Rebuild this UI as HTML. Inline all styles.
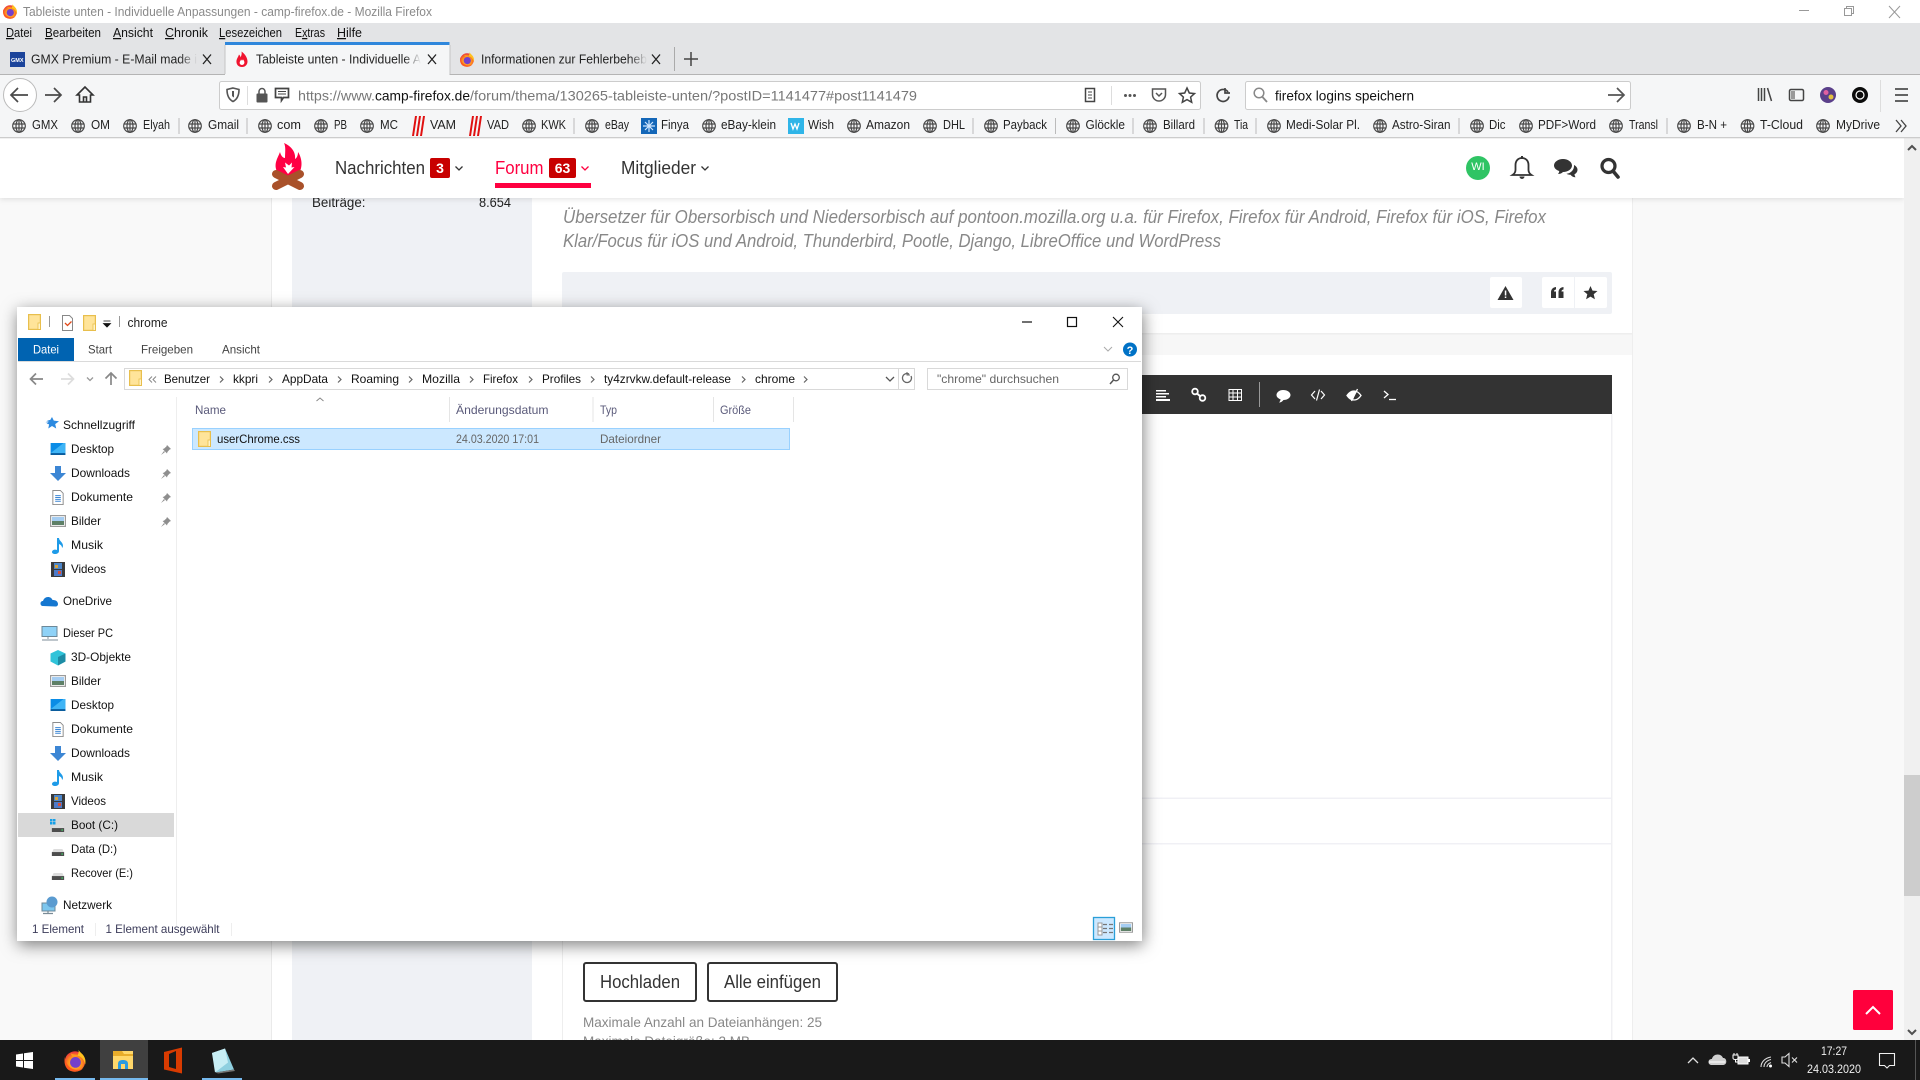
<!DOCTYPE html>
<html lang="de">
<head>
<meta charset="utf-8">
<title>Tableiste unten</title>
<style>
html,body{margin:0;padding:0;width:1920px;height:1080px;overflow:hidden;background:#f9f9f9}
svg{display:block}
text{font-family:"Liberation Sans",sans-serif;fill:#222}
.m{font-size:12.5px;fill:#111}
.tab{font-size:12.5px;fill:#222}
.bm{font-size:12.5px;fill:#222}
.ex{font-size:12px;fill:#111}
.hd{font-size:12px;fill:#5a5a7a}
.gr{font-size:12px;fill:#666}
.site{font-size:18px;fill:#333}
.it{font-size:18px;font-style:italic;fill:#888}
</style>
</head>
<body>
<svg xmlns="http://www.w3.org/2000/svg" width="1920" height="1080" viewBox="0 0 1920 1080">
<defs>
<filter id="ws" x="-10%" y="-10%" width="120%" height="120%"><feDropShadow dx="1" dy="4" stdDeviation="8" flood-color="#000" flood-opacity=".5"/></filter>
<filter id="hs" x="-5%" y="-30%" width="110%" height="160%"><feDropShadow dx="0" dy="1" stdDeviation="3" flood-color="#000" flood-opacity=".12"/></filter>
<radialGradient id="ff" cx=".5" cy=".6" r=".6"><stop offset="0" stop-color="#ffd23a"/><stop offset=".6" stop-color="#ff8a1e"/><stop offset="1" stop-color="#e8303c"/></radialGradient>
<linearGradient id="f1" gradientUnits="userSpaceOnUse" x1="180" x2="197" y1="0" y2="0"><stop offset="0" stop-color="#222"/><stop offset="1" stop-color="#222" stop-opacity="0"/></linearGradient>
<linearGradient id="f2" gradientUnits="userSpaceOnUse" x1="404" x2="421" y1="0" y2="0"><stop offset="0" stop-color="#222"/><stop offset="1" stop-color="#222" stop-opacity="0"/></linearGradient>
<linearGradient id="f3" gradientUnits="userSpaceOnUse" x1="630" x2="647" y1="0" y2="0"><stop offset="0" stop-color="#222"/><stop offset="1" stop-color="#222" stop-opacity="0"/></linearGradient>
<symbol id="g" viewBox="0 0 14 14" overflow="visible"><g fill="none" stroke="#4a4a4a" stroke-width="1.2"><circle cx="7" cy="7" r="6.3"/><ellipse cx="7" cy="7" rx="3" ry="6.3"/><path d="M1 5h12M1 9h12M7 .7v12.6"/></g></symbol>
<symbol id="fo" viewBox="0 0 13 16"><rect x=".6" y=".6" width="11.8" height="14.8" fill="#ffe49a" stroke="#e8bf4d" stroke-width="1.2"/><rect x="10" y="9" width="2.4" height="6.4" fill="#fff3c8" stroke="#e8bf4d" stroke-width=".8"/></symbol>
<symbol id="fx" viewBox="0 0 16 16"><circle cx="8" cy="9" r="6.8" fill="url(#ff)"/><path d="M10 .3c.5 2.500 4 3.500 4.800 7.200.3 1.500.2 2.500 0 3.500C14 7.500 12 5.500 9.500 5.200 10.500 3.500 10.800 2 10 .3z" fill="#ffc21e"/><path d="M5 3.500c1 .5 2.500 1 4 1 1 .6-.5 2-2 2.500z" fill="#ff9a1e"/><circle cx="8.300" cy="9.600" r="3.600" fill="#7440cc"/><path d="M1.300 6c.2 4.500 3.500 8.800 8.700 8.500 1.500 0 2.500-.4 3.500-1-2.500 2.600-6.500 2.800-9.500 1.300C1.500 13.300.4 9.500 1.300 6z" fill="#ff5a1f"/></symbol>
<symbol id="bar" viewBox="0 0 14 20"><path d="M3 0h2L2 20H0zM7 0h2L6 20H4zM11 0h2l-3 20H8z" fill="#e01010"/></symbol>
<symbol id="desk" viewBox="0 0 16 13"><rect width="16" height="13" fill="#0a8ce6"/><path d="M0 11L14 0h2v11z" fill="#3fb4f5"/><rect y="11" width="16" height="2" fill="#0a5c9c"/></symbol>
<symbol id="dl" viewBox="0 0 16 15"><path d="M5 0h6v7h5l-8 8-8-8h5z" fill="#3c86d4"/></symbol>
<symbol id="doc" viewBox="0 0 12 16"><path d="M.5.5h8l3 3v12h-11z" fill="#fff" stroke="#8b8b8b"/><path d="M3 6h6M3 8h6M3 10h6M3 12h6" stroke="#3c86d4"/></symbol>
<symbol id="pic" viewBox="0 0 16 12"><rect x=".6" y=".6" width="14.8" height="10.8" fill="#fff" stroke="#9b9b9b" stroke-width="1.2"/><rect x="2" y="2" width="12" height="4" fill="#a5cdf2"/><rect x="2" y="6" width="12" height="4" fill="#5e8067"/></symbol>
<symbol id="mus" viewBox="0 0 12 16"><path d="M5 0h2c0 3 4 4 4 8 0 1-1 2-1 2 0-2-1-3-3-4v7c0 2-2 3-4 3s-3-1-3-2c0-2 3-3 5-2z" fill="#1e9be8"/></symbol>
<symbol id="vid" viewBox="0 0 14 15"><rect width="14" height="15" fill="#3a3a3a"/><rect x="3" y="1" width="8" height="6" fill="#4d86c9"/><rect x="3" y="8" width="8" height="6" fill="#4d7ac9"/><rect x="4" y="3" width="3" height="3" fill="#d8a23a"/><rect x="7" y="9" width="3" height="3" fill="#d84f3a"/></symbol>
<symbol id="pin" viewBox="0 0 10 10"><path d="M6 0l4 4-1.5.6L6.4 7 6 8.5 1.6 4 3 3.6 5.4 1.5zM3 6L0 10l4-3z" fill="#8e8e8e"/></symbol>
<symbol id="hdd" viewBox="0 0 14 8"><path d="M2 0h10l2 4H0z" fill="#ddd"/><rect y="3.5" width="14" height="4.5" fill="#4d4d4d"/><rect x="11" y="5" width="1.5" height="1.5" fill="#3fe06a"/></symbol>
</defs>

<!-- page background -->
<rect width="1920" height="1080" fill="#f9f9f9"/>
<rect x="272" y="138" width="1360" height="902" fill="#fff"/>
<rect x="271" y="138" width="1" height="902" fill="#eaeaea"/>
<rect x="292" y="138" width="240" height="902" fill="#eff1f5"/>
<rect x="532" y="334" width="1100" height="21" fill="#f7f7f7"/>
<rect x="532" y="333" width="1100" height="1.5" fill="#eee"/>
<rect x="1632" y="138" width="1" height="902" fill="#eee"/>
<text x="312" y="207" font-size="14" textLength="53.5" lengthAdjust="spacingAndGlyphs" style="fill:#222">Beiträge:</text>
<text x="479" y="207" font-size="14" textLength="32" lengthAdjust="spacingAndGlyphs" style="fill:#222">8.654</text>
<text class="it" x="563" y="223" textLength="983" lengthAdjust="spacingAndGlyphs">Übersetzer für Obersorbisch und Niedersorbisch auf pontoon.mozilla.org u.a. für Firefox, Firefox für Android, Firefox für iOS, Firefox</text>
<text class="it" x="563" y="247" textLength="658" lengthAdjust="spacingAndGlyphs">Klar/Focus für iOS und Android, Thunderbird, Pootle, Django, LibreOffice und WordPress</text>
<rect x="562" y="272" width="1050" height="42" rx="2" fill="#eff1f5"/>
<rect x="1490" y="277" width="32" height="31" rx="2" fill="#fff"/>
<rect x="1542" y="277" width="65" height="31" rx="2" fill="#fff"/>
<rect x="1574" y="277" width="1" height="31" fill="#eff1f5"/>
<path d="M1505.500 286l8 14h-16z" fill="#333"/><rect x="1504.800" y="290.500" width="1.500" height="5" fill="#fff"/><rect x="1504.800" y="296.500" width="1.500" height="1.500" fill="#fff"/>
<path d="M1551 298v-5.500c0-3 1.500-5 5-5.500v2.500c-1.500.3-2 1-2 2h2v6.500zM1558.500 298v-5.500c0-3 1.500-5 5-5.500v2.500c-1.500.3-2 1-2 2h2v6.500z" fill="#333"/>
<path d="M1590.500 286l2 4.600 5 .4-3.800 3.300 1.200 5-4.400-2.700-4.400 2.700 1.200-5-3.800-3.300 5-.4z" fill="#333"/>

<!-- editor -->
<rect x="562" y="414" width="1" height="626" fill="#eee"/>
<rect x="1611" y="414" width="1.500" height="626" fill="#f0f0f3"/>
<rect x="562" y="375" width="1050" height="39" fill="#333"/>
<rect x="1142" y="797.500" width="469" height="1.500" fill="#f0f0f5"/>
<rect x="1142" y="843" width="469" height="1.500" fill="#f0f0f5"/>
<g fill="#fff" stroke="none">
<path d="M1156 390h10v1.500h-10zM1156 393h13v1.500h-13zM1156 396h10v1.500h-10zM1156 399h14v2h-14z"/>
<rect x="1259" y="382" width="1" height="25" fill="#999"/>
<path d="M1283 390c4.500 0 7.500 2.300 7.500 5s-3 5-7 5c-1 1.500-3 2.500-4.500 2.500 1-1 1.500-2 1.500-3.200-2.500-.8-4-2.500-4-4.300 0-2.700 3-5 6.500-5z"/>
<path d="M1354 391c-3 0-5.500 2-7 4.500 1.500 2.500 4 4.500 6 4.500l3-9z"/>
</g>
<g fill="none" stroke="#fff">
<path d="M1197 393.500l3.500 3" stroke-width="2"/><circle cx="1195" cy="391.500" r="2.800" stroke-width="1.800"/><circle cx="1202.500" cy="398" r="2.800" stroke-width="1.800"/>
<path d="M1229 389.500h12.500v11H1229zM1229 393h12.500M1229 397h12.500M1233 389.500v11M1237.500 389.500v11" stroke-width="1"/>
<path d="M1315 391l-3.500 4 3.500 4M1321 391l3.500 4-3.500 4M1319.500 389.500l-3 11" stroke-width="1.200"/>
<path d="M1347 395.500c2-3 4.500-4.500 7-4.500s5 1.500 7 4.500c-2 3-4.500 4.500-7 4.500s-5-1.500-7-4.500zM1357.500 389l-6 12" stroke-width="1.300"/>
<path d="M1384 391l4 3.500-4 3.500" stroke-width="1.300"/><path d="M1389 399.500h7" stroke-width="1.300"/>
</g>

<!-- bottom buttons -->
<rect x="584" y="963" width="112" height="38" rx="2" fill="#fff" stroke="#333" stroke-width="2"/>
<rect x="708" y="963" width="129" height="38" rx="2" fill="#fff" stroke="#333" stroke-width="2"/>
<text x="600" y="988" font-size="18" textLength="80" lengthAdjust="spacingAndGlyphs" style="fill:#333">Hochladen</text>
<text x="724" y="988" font-size="18" textLength="97" lengthAdjust="spacingAndGlyphs" style="fill:#333">Alle einfügen</text>
<text x="583" y="1027" font-size="14" textLength="239" lengthAdjust="spacingAndGlyphs" style="fill:#888">Maximale Anzahl an Dateianhängen: 25</text>
<text x="583" y="1046" font-size="14" textLength="167" lengthAdjust="spacingAndGlyphs" style="fill:#888">Maximale Dateigröße: 2 MB</text>

<!-- site header -->
<rect x="0" y="138" width="1904" height="60" fill="#fff" filter="url(#hs)"/>
<path d="M288 179c-9-1-14-9-12-17 1-4 3-7 4-10 1 4 3 6 5 6 0-6 1-11-1-15 7 3 12 9 11 16 2-1 3-4 3-7 4 6 5 15 1 21-2 4-6 6-11 6z" fill="#ff0044"/>
<path d="M288 174l-5-7 3 .5-1-5 4 3 3-3-.5 5 3-.5z" fill="#fff"/>
<path d="M276 174l24 12M300 174l-24 12" stroke="#a9512a" stroke-width="8" stroke-linecap="round"/>
<text class="site" x="335" y="174" textLength="90" lengthAdjust="spacingAndGlyphs">Nachrichten</text>
<rect x="430" y="158" width="20" height="20" rx="2" fill="#c80000"/>
<text x="440" y="173" font-size="14" font-weight="700" text-anchor="middle" style="fill:#fff">3</text>
<path d="M455.500 166.500l3.500 3.500 3.500-3.500" fill="none" stroke="#333" stroke-width="1.300"/>
<text class="site" x="495" y="174" textLength="48.500" lengthAdjust="spacingAndGlyphs" style="fill:#ff0040">Forum</text>
<rect x="549" y="158" width="27" height="20" rx="2" fill="#c80000"/>
<text x="562.500" y="173" font-size="14" font-weight="700" text-anchor="middle" style="fill:#fff">63</text>
<path d="M581.500 166.500l3.500 3.500 3.500-3.500" fill="none" stroke="#ff0040" stroke-width="1.300"/>
<rect x="495" y="183" width="96" height="5" fill="#ff0040"/>
<text class="site" x="621" y="174" textLength="75" lengthAdjust="spacingAndGlyphs">Mitglieder</text>
<path d="M701.500 166.500l3.500 3.500 3.500-3.500" fill="none" stroke="#333" stroke-width="1.300"/>
<circle cx="1478" cy="168" r="12" fill="#2fc464"/>
<text x="1478" y="170" font-size="11" text-anchor="middle" style="fill:#fff">WI</text>
<path d="M1522 158c-4 0-6.500 3-6.500 7v5c0 2-1.500 4-3 5h19c-1.500-1-3-3-3-5v-5c0-4-2.500-7-6.500-7z" fill="none" stroke="#333" stroke-width="1.800"/>
<path d="M1519.500 176.500a2.500 2.500 0 0 0 5 0zM1521 156h2v3h-2z" fill="#333"/>
<path d="M1563 159c5 0 9 3 9 6.500s-4 6.500-9 6.500c-1.500 1.500-3.500 2-5 2 .8-1 1.300-2 1.200-3-3-1-5.200-3-5.200-5.500 0-3.500 4-6.500 9-6.500z" fill="#333"/>
<path d="M1574 165c2 1 3.500 2.700 3.500 4.700 0 2-1.200 3.600-3 4.500 0 1 .5 2 1 3-2 0-4-1-5-2.500-1.500 0-3-.3-4-1 4-.2 8-3.700 7.500-8.700z" fill="#333"/>
<circle cx="1608.500" cy="166" r="6.500" fill="none" stroke="#333" stroke-width="3.200"/>
<path d="M1613 171l5 6" stroke="#333" stroke-width="3.600" stroke-linecap="round"/>

<!-- scrollbar -->
<rect x="1904" y="138" width="16" height="902" fill="#f0f0f0"/>
<rect x="1904" y="775" width="16" height="121" fill="#cdcdcd"/>
<path d="M1908 150l4-4 4 4" fill="none" stroke="#505050" stroke-width="2"/>
<path d="M1908 1030l4 4 4-4" fill="none" stroke="#505050" stroke-width="2"/>
<rect x="1853" y="990" width="40" height="40" rx="1.500" fill="#ff003c"/>
<path d="M1866 1014l7-7 7 7" fill="none" stroke="#fff" stroke-width="2"/>

<!-- browser chrome -->
<rect width="1920" height="23" fill="#fff"/>
<rect y="23" width="1920" height="51" fill="#e3e4e6"/>
<rect y="74" width="1920" height="1" fill="#b4b4b4"/>
<rect y="75" width="1920" height="62" fill="#f5f6f7"/>
<rect y="137" width="1920" height="1.300" fill="#ccc"/>
<use href="#fx" x="2" y="3" width="16" height="16"/>
<text x="23" y="16" font-size="12.500" textLength="409" lengthAdjust="spacingAndGlyphs" style="fill:#8a8a8a">Tableiste unten - Individuelle Anpassungen - camp-firefox.de - Mozilla Firefox</text>
<path d="M1799 10.500h10" stroke="#999"/>
<path d="M1844.500 8.500h7v7h-7zM1846.500 8.500v-2h7v7h-2" fill="none" stroke="#999"/>
<path d="M1889 6l11 12M1900 6l-11 12" stroke="#999"/>
<text class="m" x="6" y="37" textLength="26" lengthAdjust="spacingAndGlyphs"><tspan style="text-decoration:underline">D</tspan>atei</text>
<text class="m" x="45" y="37" textLength="56" lengthAdjust="spacingAndGlyphs"><tspan style="text-decoration:underline">B</tspan>earbeiten</text>
<text class="m" x="113" y="37" textLength="40" lengthAdjust="spacingAndGlyphs"><tspan style="text-decoration:underline">A</tspan>nsicht</text>
<text class="m" x="165" y="37" textLength="43" lengthAdjust="spacingAndGlyphs"><tspan style="text-decoration:underline">C</tspan>hronik</text>
<text class="m" x="219" y="37" textLength="63" lengthAdjust="spacingAndGlyphs"><tspan style="text-decoration:underline">L</tspan>esezeichen</text>
<text class="m" x="295" y="37" textLength="30" lengthAdjust="spacingAndGlyphs">E<tspan style="text-decoration:underline">x</tspan>tras</text>
<text class="m" x="337" y="37" textLength="25" lengthAdjust="spacingAndGlyphs"><tspan style="text-decoration:underline">H</tspan>ilfe</text>

<!-- tabs -->
<rect x="225" y="42" width="224.500" height="33" fill="#f5f6f7"/>
<rect x="225" y="42" width="224.500" height="3" fill="#2f87dc"/>
<rect x="224.500" y="45" width="1" height="29" fill="#c4c4c4"/><rect x="449.500" y="45" width="1" height="29" fill="#c4c4c4"/>
<rect x="10" y="52" width="15" height="15" fill="#1c449b"/>
<text x="11" y="62" font-size="5.500" font-weight="700" style="fill:#fff">GMX</text>
<text class="tab" x="31" y="63.500" textLength="166" lengthAdjust="spacingAndGlyphs" style="fill:url(#f1)">GMX Premium - E-Mail made i</text>
<path d="M203 54.500l8 9.500M211 54.500l-8 9.500" stroke="#222" stroke-width="1.300"/>
<path d="M242 67c-4 0-6-3-5.500-6.500.3-2 2-4 2.500-6 1 1 1.500 2 1.500 3 1-2 1.500-4 1-6 3 2 6 6 6 10 0 3-2 5.500-5.500 5.500z" fill="#f0142f"/>
<path d="M242 65c-1.500 0-2.500-1.200-2.300-2.600.1-1 1-1.800 1.300-3l1 1.300 1-1.300c.8 1 1.400 2 1.400 3 0 1.400-1 2.600-2.400 2.600z" fill="#fff"/>
<text class="tab" x="256" y="63.500" textLength="165" lengthAdjust="spacingAndGlyphs" style="fill:url(#f2)">Tableiste unten - Individuelle A</text>
<path d="M428 54.500l8 9.500M436 54.500l-8 9.500" stroke="#222" stroke-width="1.300"/>
<use href="#fx" x="459" y="51" width="16" height="16"/>
<text class="tab" x="481" y="63.500" textLength="166" lengthAdjust="spacingAndGlyphs" style="fill:url(#f3)">Informationen zur Fehlerbeheb</text>
<path d="M652 54.500l8 9.500M660 54.500l-8 9.500" stroke="#222" stroke-width="1.300"/>
<rect x="674" y="47" width="1" height="24" fill="#aaa"/>
<path d="M691 52v14M684 59h14" stroke="#444" stroke-width="1.500"/>

<!-- navbar -->
<circle cx="20" cy="95" r="16.500" fill="#fff" stroke="#bbb"/>
<path d="M28 95H12M18 88l-7 7 7 7" fill="none" stroke="#4a4a4a" stroke-width="1.700"/>
<path d="M45 95h16M54 88l7 7-7 7" fill="none" stroke="#4a4a4a" stroke-width="1.700"/>
<path d="M85 87l-8 8h2.500v7h11v-7h2.500zM83.500 102v-5h3v5" fill="none" stroke="#333" stroke-width="1.600"/>
<rect x="219.500" y="81.500" width="981" height="28" rx="2" fill="#fff" stroke="#ccc"/>
<path d="M233 88l6 1.500c0 6-2 10-6 12-4-2-6-6-6-12z" fill="none" stroke="#555" stroke-width="1.600"/><path d="M234 91v6.500c-1-.5-1.500-1-2-1.500v-5z" fill="#555"/>
<rect x="247" y="86" width="1" height="19" fill="#ddd"/>
<rect x="256.500" y="93.500" width="11" height="9" rx="1" fill="#555"/><path d="M259 93.500v-2a3 3 0 0 1 6 0v2" fill="none" stroke="#555" stroke-width="1.500"/>
<path d="M275.500 88.500h13v9h-5l-2 3v-3h-6z" fill="none" stroke="#444" stroke-width="1.700"/><path d="M278 91.500h8M278 94h8" stroke="#444"/>
<text x="298" y="100.600" font-size="14" textLength="77" lengthAdjust="spacingAndGlyphs" style="fill:#777">https://www.</text>
<text x="375" y="100.600" font-size="14" textLength="95" lengthAdjust="spacingAndGlyphs" style="fill:#111">camp-firefox.de</text>
<text x="470" y="100.600" font-size="14" textLength="447" lengthAdjust="spacingAndGlyphs" style="fill:#777">/forum/thema/130265-tableiste-unten/?postID=1141477#post1141479</text>
<path d="M1085.500 88.500h9v13h-9z" fill="none" stroke="#444" stroke-width="1.500"/><path d="M1088 92h4M1088 95h4M1088 98h4" stroke="#444"/>
<rect x="1111" y="86" width="1" height="19" fill="#ddd"/>
<circle cx="1125.500" cy="95.500" r="1.500" fill="#555"/><circle cx="1130" cy="95.500" r="1.500" fill="#555"/><circle cx="1134.500" cy="95.500" r="1.500" fill="#555"/>
<path d="M1152.500 89h13v5.500a6.500 6.500 0 0 1-13 0z" fill="none" stroke="#555" stroke-width="1.500"/><path d="M1156 93l3 3 3-3" fill="none" stroke="#555" stroke-width="1.500"/>
<path d="M1187 88l2.300 5 5.200.6-3.900 3.500 1.100 5.200-4.700-2.700-4.700 2.700 1.100-5.200-3.900-3.500 5.200-.6z" fill="none" stroke="#444" stroke-width="1.500"/>
<path d="M1228 92a6 6 0 1 0 1 4.500" fill="none" stroke="#444" stroke-width="1.700"/><path d="M1225 88v5h5" fill="none" stroke="#444" stroke-width="1.700"/>
<rect x="1245.500" y="81.500" width="385" height="28" rx="2" fill="#fff" stroke="#ccc"/>
<circle cx="1259" cy="93" r="4.800" fill="none" stroke="#888" stroke-width="1.500"/><path d="M1262.500 97l4.500 5" stroke="#888" stroke-width="1.800"/>
<text x="1275" y="100.600" font-size="14" textLength="139" lengthAdjust="spacingAndGlyphs" style="fill:#111">firefox logins speichern</text>
<path d="M1608 95h15M1617 88l7 7-7 7" fill="none" stroke="#555" stroke-width="1.700"/>
<path d="M1758.500 88v13M1761.500 88v13M1764.500 88v13M1767.500 88l4 13" stroke="#444" stroke-width="1.500" fill="none"/>
<rect x="1789.500" y="89.500" width="14" height="11" rx="1.500" fill="none" stroke="#444" stroke-width="1.500"/><rect x="1791" y="91" width="4" height="8" fill="#999"/>
<circle cx="1828" cy="95" r="8" fill="#5a3f8a"/><circle cx="1826" cy="92.500" r="2.500" fill="#e060a0"/><circle cx="1831" cy="97" r="2.500" fill="#e2c040"/>
<circle cx="1860" cy="95" r="8" fill="#0b0b0b"/><circle cx="1860" cy="95" r="4" fill="none" stroke="#fff" stroke-width="1.200"/>
<rect x="1880" y="80" width="1" height="32" fill="#ddd"/>
<path d="M1895 89h13M1895 95h13M1895 101h13" stroke="#333" stroke-width="1.600"/>

<!-- bookmarks -->
<g>
<use href="#g" x="12" y="119" width="14" height="14"/><text class="bm" x="32" y="129" textLength="26" lengthAdjust="spacingAndGlyphs">GMX</text>
<use href="#g" x="71" y="119" width="14" height="14"/><text class="bm" x="91" y="129" textLength="19" lengthAdjust="spacingAndGlyphs">OM</text>
<use href="#g" x="123" y="119" width="14" height="14"/><text class="bm" x="143" y="129" textLength="27" lengthAdjust="spacingAndGlyphs">Elyah</text>
<use href="#g" x="188" y="119" width="14" height="14"/><text class="bm" x="208" y="129" textLength="31" lengthAdjust="spacingAndGlyphs">Gmail</text>
<use href="#g" x="258" y="119" width="14" height="14"/><text class="bm" x="277" y="129" textLength="24" lengthAdjust="spacingAndGlyphs">com</text>
<use href="#g" x="314" y="119" width="14" height="14"/><text class="bm" x="334" y="129" textLength="13" lengthAdjust="spacingAndGlyphs">PB</text>
<use href="#g" x="360" y="119" width="14" height="14"/><text class="bm" x="380" y="129" textLength="18" lengthAdjust="spacingAndGlyphs">MC</text>
<use href="#bar" x="412" y="116" width="14" height="20"/><text class="bm" x="430" y="129" textLength="26" lengthAdjust="spacingAndGlyphs">VAM</text>
<use href="#bar" x="469" y="116" width="14" height="20"/><text class="bm" x="487" y="129" textLength="22" lengthAdjust="spacingAndGlyphs">VAD</text>
<use href="#g" x="522" y="119" width="14" height="14"/><text class="bm" x="541" y="129" textLength="25" lengthAdjust="spacingAndGlyphs">KWK</text>
<use href="#g" x="585" y="119" width="14" height="14"/><text class="bm" x="605" y="129" textLength="24" lengthAdjust="spacingAndGlyphs">eBay</text>
<rect x="641" y="118" width="16" height="16" fill="#1467b8"/><path d="M645 122l8 8M653 122l-8 8M649 120v12M643 126h12" stroke="#cfe6ff" stroke-width="1.200"/><text class="bm" x="661" y="129" textLength="28" lengthAdjust="spacingAndGlyphs">Finya</text>
<use href="#g" x="702" y="119" width="14" height="14"/><text class="bm" x="721" y="129" textLength="55" lengthAdjust="spacingAndGlyphs">eBay-klein</text>
<rect x="788" y="118" width="16" height="16" fill="#2fb5e8"/><path d="M791 123l2 6 2-5 2 5 2-6" fill="none" stroke="#fff" stroke-width="1.300"/><text class="bm" x="808" y="129" textLength="26" lengthAdjust="spacingAndGlyphs">Wish</text>
<use href="#g" x="847" y="119" width="14" height="14"/><text class="bm" x="866" y="129" textLength="44" lengthAdjust="spacingAndGlyphs">Amazon</text>
<use href="#g" x="923" y="119" width="14" height="14"/><text class="bm" x="943" y="129" textLength="22" lengthAdjust="spacingAndGlyphs">DHL</text>
<use href="#g" x="984" y="119" width="14" height="14"/><text class="bm" x="1003" y="129" textLength="44" lengthAdjust="spacingAndGlyphs">Payback</text>
<use href="#g" x="1066" y="119" width="14" height="14"/><text class="bm" x="1085.500" y="129" textLength="39.500" lengthAdjust="spacingAndGlyphs">Glöckle</text>
<use href="#g" x="1143" y="119" width="14" height="14"/><text class="bm" x="1163" y="129" textLength="32" lengthAdjust="spacingAndGlyphs">Billard</text>
<use href="#g" x="1214.500" y="119" width="14" height="14"/><text class="bm" x="1234" y="129" textLength="14" lengthAdjust="spacingAndGlyphs">Tia</text>
<use href="#g" x="1267" y="119" width="14" height="14"/><text class="bm" x="1286" y="129" textLength="74" lengthAdjust="spacingAndGlyphs">Medi-Solar Pl.</text>
<use href="#g" x="1373" y="119" width="14" height="14"/><text class="bm" x="1392" y="129" textLength="58.500" lengthAdjust="spacingAndGlyphs">Astro-Siran</text>
<use href="#g" x="1470" y="119" width="14" height="14"/><text class="bm" x="1489" y="129" textLength="16.500" lengthAdjust="spacingAndGlyphs">Dic</text>
<use href="#g" x="1519" y="119" width="14" height="14"/><text class="bm" x="1538" y="129" textLength="58" lengthAdjust="spacingAndGlyphs">PDF&gt;Word</text>
<use href="#g" x="1609" y="119" width="14" height="14"/><text class="bm" x="1629" y="129" textLength="29" lengthAdjust="spacingAndGlyphs">Transl</text>
<use href="#g" x="1677" y="119" width="14" height="14"/><text class="bm" x="1697" y="129" textLength="30" lengthAdjust="spacingAndGlyphs">B-N +</text>
<use href="#g" x="1740.500" y="119" width="14" height="14"/><text class="bm" x="1760" y="129" textLength="43" lengthAdjust="spacingAndGlyphs">T-Cloud</text>
<use href="#g" x="1816" y="119" width="14" height="14"/><text class="bm" x="1836" y="129" textLength="44" lengthAdjust="spacingAndGlyphs">MyDrive</text>
</g>
<path d="M179 118v16M247 118v16M574 118v16M973 118v16M1055.500 118v16M1133 118v16M1204 118v16M1256 118v16M1459 118v16M1667 118v16" stroke="#bbb"/>
<path d="M1896 120l5 6-5 6M1901 120l5 6-5 6" fill="none" stroke="#444" stroke-width="1.300"/>

<!-- explorer window -->
<rect x="17" y="307" width="1125" height="634" fill="#fff" filter="url(#ws)"/>
<use href="#fo" x="28" y="314" width="13" height="16"/>
<rect x="49" y="316" width="1" height="11" fill="#999"/>
<path d="M62.500 315.500h7l3 3v12h-10z" fill="#fff" stroke="#888"/><path d="M65 323l2.500 2.500 4-4" fill="none" stroke="#e04a1a" stroke-width="1.300"/>
<use href="#fo" x="83" y="315" width="13" height="16"/>
<path d="M103.500 321h7M103.500 323.500h7l-3.500 3.500z" stroke="#111" fill="#111" stroke-width=".8"/>
<rect x="119" y="316" width="1" height="11" fill="#999"/>
<text x="127.500" y="327" font-size="12.500" textLength="40" lengthAdjust="spacingAndGlyphs" style="fill:#222">chrome</text>
<path d="M1022 322h10" stroke="#111" stroke-width="1.200"/>
<rect x="1067.500" y="317.500" width="9" height="9" fill="none" stroke="#111" stroke-width="1.200"/>
<path d="M1113 317l10 10M1123 317l-10 10" stroke="#111" stroke-width="1.100"/>
<rect x="18" y="338" width="56" height="23" fill="#0063b1"/>
<text x="33" y="353.500" font-size="12" textLength="26" lengthAdjust="spacingAndGlyphs" style="fill:#fff">Datei</text>
<text class="ex" x="88" y="353.500" textLength="24" lengthAdjust="spacingAndGlyphs" style="fill:#444">Start</text>
<text class="ex" x="141" y="353.500" textLength="52" lengthAdjust="spacingAndGlyphs" style="fill:#444">Freigeben</text>
<text class="ex" x="222" y="353.500" textLength="38" lengthAdjust="spacingAndGlyphs" style="fill:#444">Ansicht</text>
<rect x="18" y="361" width="1123" height="1" fill="#dadada"/>
<path d="M1104 347l4 4 4-4" fill="none" stroke="#aaa"/>
<circle cx="1130" cy="349.500" r="7" fill="#0072c6"/>
<text x="1130" y="354" font-size="11" font-weight="700" text-anchor="middle" style="fill:#fff">?</text>

<path d="M43 379H31M36 373.500l-5.500 5.500 5.500 5.500" fill="none" stroke="#888" stroke-width="1.700"/>
<path d="M61 379h12M68 373.500l5.500 5.500-5.500 5.500" fill="none" stroke="#ddd" stroke-width="1.700"/>
<path d="M87 377.500l3 3 3-3" fill="none" stroke="#999" stroke-width="1.300"/>
<path d="M111 385v-12M105.500 378.500l5.500-5.500 5.500 5.500" fill="none" stroke="#888" stroke-width="1.700"/>
<rect x="124.500" y="368.500" width="790" height="21" fill="#fff" stroke="#d9d9d9"/>
<use href="#fo" x="129" y="370" width="13" height="16"/>
<path d="M152 376.500l-3 3 3 3M156 376.500l-3 3 3 3" fill="none" stroke="#888"/>
<text class="ex" x="164" y="383" textLength="46" lengthAdjust="spacingAndGlyphs">Benutzer</text>
<text class="ex" x="233" y="383" textLength="25" lengthAdjust="spacingAndGlyphs">kkpri</text>
<text class="ex" x="282" y="383" textLength="46" lengthAdjust="spacingAndGlyphs">AppData</text>
<text class="ex" x="351" y="383" textLength="48" lengthAdjust="spacingAndGlyphs">Roaming</text>
<text class="ex" x="422" y="383" textLength="38" lengthAdjust="spacingAndGlyphs">Mozilla</text>
<text class="ex" x="483" y="383" textLength="35" lengthAdjust="spacingAndGlyphs">Firefox</text>
<text class="ex" x="542" y="383" textLength="39" lengthAdjust="spacingAndGlyphs">Profiles</text>
<text class="ex" x="604" y="383" textLength="127" lengthAdjust="spacingAndGlyphs">ty4zrvkw.default-release</text>
<text class="ex" x="755" y="383" textLength="40" lengthAdjust="spacingAndGlyphs">chrome</text>
<path d="M220 376.500l3 3-3 3M269 376.500l3 3-3 3M338 376.500l3 3-3 3M409 376.500l3 3-3 3M470 376.500l3 3-3 3M529 376.500l3 3-3 3M591 376.500l3 3-3 3M742 376.500l3 3-3 3M804 376.500l3 3-3 3" fill="none" stroke="#666" stroke-width="1.200"/>
<path d="M886 377l4 4 4-4" fill="none" stroke="#555" stroke-width="1.300"/>
<rect x="898" y="369" width="1" height="20" fill="#d9d9d9"/>
<path d="M911 376a4.500 4.500 0 1 1-2-2" fill="none" stroke="#666" stroke-width="1.300"/><path d="M907 372v3h3" fill="none" stroke="#666"/>
<rect x="927.500" y="368.500" width="200" height="21" fill="#fff" stroke="#d9d9d9"/>
<text class="gr" x="937" y="383" textLength="122" lengthAdjust="spacingAndGlyphs">"chrome" durchsuchen</text>
<circle cx="1116" cy="377.500" r="3.300" fill="none" stroke="#555" stroke-width="1.300"/><path d="M1113.500 380l-3.500 4" stroke="#555" stroke-width="1.500"/>

<!-- columns -->
<path d="M316.500 401l3.500-3 3.500 3" fill="none" stroke="#888"/>
<text class="hd" x="195" y="414" textLength="31" lengthAdjust="spacingAndGlyphs">Name</text>
<text class="hd" x="456" y="414" textLength="92.500" lengthAdjust="spacingAndGlyphs">Änderungsdatum</text>
<text class="hd" x="600" y="414" textLength="17" lengthAdjust="spacingAndGlyphs">Typ</text>
<text class="hd" x="720" y="414" textLength="31" lengthAdjust="spacingAndGlyphs">Größe</text>
<path d="M449.500 397v25M593 397v25M713.500 397v25M793.500 397v25" stroke="#e5e5e5"/>
<rect x="192.500" y="428.500" width="597" height="21" fill="#cce8ff" stroke="#99d1ff"/>
<use href="#fo" x="198" y="431" width="13" height="16"/>
<text class="ex" x="217" y="443" textLength="83" lengthAdjust="spacingAndGlyphs">userChrome.css</text>
<text class="gr" x="456" y="443" textLength="83" lengthAdjust="spacingAndGlyphs">24.03.2020 17:01</text>
<text class="gr" x="600" y="443" textLength="61" lengthAdjust="spacingAndGlyphs">Dateiordner</text>

<!-- nav pane -->
<rect x="176" y="397" width="1" height="530" fill="#eee"/>
<rect x="18" y="813" width="156" height="24" fill="#d9d9d9"/>
<path d="M52 417l1.800 3.600 5.200.6-3.800 2.900 1 4.400-4.200-2.500-3.700 2.500.8-4.200-2.600-.4 2-1.300-3-.5 3.700-1.100-2.500-.8 3.500-.2z" fill="#2c8ae0"/>
<text class="ex" x="63" y="429" textLength="72" lengthAdjust="spacingAndGlyphs">Schnellzugriff</text>
<use href="#desk" x="50" y="443" width="16" height="12"/><text class="ex" x="71" y="453" textLength="43" lengthAdjust="spacingAndGlyphs">Desktop</text><use href="#pin" x="161" y="445" width="10" height="10"/>
<use href="#dl" x="50" y="466" width="16" height="15"/><text class="ex" x="71" y="477" textLength="59" lengthAdjust="spacingAndGlyphs">Downloads</text><use href="#pin" x="161" y="469" width="10" height="10"/>
<use href="#doc" x="52" y="490" width="12" height="15"/><text class="ex" x="71" y="501" textLength="62" lengthAdjust="spacingAndGlyphs">Dokumente</text><use href="#pin" x="161" y="493" width="10" height="10"/>
<use href="#pic" x="50" y="515" width="16" height="12"/><text class="ex" x="71" y="525" textLength="30" lengthAdjust="spacingAndGlyphs">Bilder</text><use href="#pin" x="161" y="517" width="10" height="10"/>
<use href="#mus" x="52" y="538" width="12" height="16"/><text class="ex" x="71" y="549" textLength="32" lengthAdjust="spacingAndGlyphs">Musik</text>
<use href="#vid" x="51" y="562" width="14" height="15"/><text class="ex" x="71" y="573" textLength="35" lengthAdjust="spacingAndGlyphs">Videos</text>
<path d="M43 606c-1.500 0-2.500-1-2.500-2.500s1-2.500 2.500-2.500c.7-2.500 2.700-4 5-4 2 0 3.700 1 4.500 3 3-.4 5.500 1.500 5.500 4 0 1.500-1 2.500-2.500 2.500z" fill="#1577d0"/>
<text class="ex" x="63" y="605" textLength="49" lengthAdjust="spacingAndGlyphs">OneDrive</text>
<rect x="42" y="626.500" width="15" height="10" fill="#8fd2f7" stroke="#6d8898"/><path d="M48 637v2M42 640h16" stroke="#a9b4bb" stroke-width="1.400"/>
<text class="ex" x="63" y="637" textLength="50" lengthAdjust="spacingAndGlyphs">Dieser PC</text>
<path d="M58 650l7.500 3.500v8l-7.500 4-7.500-4v-8z" fill="#30c3d9"/><path d="M58 657v8.500l7.500-4v-8z" fill="#1d8ca5"/>
<text class="ex" x="71" y="661" textLength="60" lengthAdjust="spacingAndGlyphs">3D-Objekte</text>
<use href="#pic" x="50" y="675" width="16" height="12"/><text class="ex" x="71" y="685" textLength="30" lengthAdjust="spacingAndGlyphs">Bilder</text>
<use href="#desk" x="50" y="699" width="16" height="12"/><text class="ex" x="71" y="709" textLength="43" lengthAdjust="spacingAndGlyphs">Desktop</text>
<use href="#doc" x="52" y="722" width="12" height="15"/><text class="ex" x="71" y="733" textLength="62" lengthAdjust="spacingAndGlyphs">Dokumente</text>
<use href="#dl" x="50" y="746" width="16" height="15"/><text class="ex" x="71" y="757" textLength="59" lengthAdjust="spacingAndGlyphs">Downloads</text>
<use href="#mus" x="52" y="770" width="12" height="16"/><text class="ex" x="71" y="781" textLength="32" lengthAdjust="spacingAndGlyphs">Musik</text>
<use href="#vid" x="51" y="794" width="14" height="15"/><text class="ex" x="71" y="805" textLength="35" lengthAdjust="spacingAndGlyphs">Videos</text>
<path d="M50 819h2.500v2.500H50zM53 819h2.500v2.500H53zM50 822h2.500v2.500H50zM53 822h2.500v2.500H53z" fill="#18a0e8"/><use href="#hdd" x="51" y="825" width="14" height="7"/><text class="ex" x="71" y="829" textLength="47" lengthAdjust="spacingAndGlyphs">Boot (C:)</text>
<use href="#hdd" x="51" y="849" width="14" height="7"/><text class="ex" x="71" y="853" textLength="46" lengthAdjust="spacingAndGlyphs">Data (D:)</text>
<use href="#hdd" x="51" y="873" width="14" height="7"/><text class="ex" x="71" y="877" textLength="62" lengthAdjust="spacingAndGlyphs">Recover (E:)</text>
<rect x="42" y="903" width="13" height="8" fill="#7cc6ee" stroke="#6d8898"/><path d="M48 911v2M43 913.500h10" stroke="#7a8b96" stroke-width="1.200"/><circle cx="52" cy="902" r="5.500" fill="#5a9bd0"/>
<text class="ex" x="63" y="909" textLength="49" lengthAdjust="spacingAndGlyphs">Netzwerk</text>

<!-- status -->
<text class="ex" x="32" y="933" textLength="52" lengthAdjust="spacingAndGlyphs" style="fill:#3c3c5a">1 Element</text>
<rect x="95" y="923" width="1" height="13" fill="#eee"/>
<text class="ex" x="105.500" y="933" textLength="114" lengthAdjust="spacingAndGlyphs" style="fill:#3c3c5a">1 Element ausgewählt</text>
<rect x="231" y="923" width="1" height="13" fill="#eee"/>
<rect x="1093.500" y="917.500" width="21" height="22" fill="#cce8ff" stroke="#2a9fd8" stroke-width="1.300"/>
<path d="M1098 923h4v4h-4zM1098 927h4v4h-4zM1098 931h4v4h-4z" fill="#fff" stroke="#999"/>
<path d="M1103 924.500h4M1109 924.500h4M1103 928.500h4M1109 928.500h4M1103 932.500h4M1109 932.500h4" stroke="#777" stroke-width="1.200"/>
<use href="#pic" x="1119" y="922" width="14" height="11"/>

<!-- taskbar -->
<rect y="1040" width="1920" height="40" fill="#191919"/>
<rect x="100" y="1040" width="48" height="40" fill="#404040"/>
<rect x="55" y="1078" width="40" height="2" fill="#76b9ed"/>
<rect x="100" y="1078" width="48" height="2" fill="#76b9ed"/>
<rect x="202" y="1078" width="40" height="2" fill="#76b9ed"/>
<path d="M16 1054.500l7-1v6.500h-7zM24 1053.300l9-1.300v8h-9zM16 1061h7v6.500l-7-1zM24 1061h9v8l-9-1.300z" fill="#fff"/>
<use href="#fx" x="63" y="1048" width="24" height="24"/>
<path d="M113 1051h20v18h-20z" fill="#ffd76a"/><path d="M113 1051h9l2 3h9v2h-20z" fill="#e8ac2a"/><path d="M118 1064c0-3 2-4 5-4s5 1 5 4v5h-10z" fill="#2a9be0"/><rect x="121" y="1064" width="4" height="5" fill="#ffd76a"/>
<path d="M164 1052l18-4.500v26l-18-4zM169 1054v13l7 2v-18z" fill="#d83b01" fill-rule="evenodd"/>
<path d="M212 1053l13-4.500 9 21-18 3z" fill="#8fd0e0"/><path d="M212 1053l13-4.500 3 14-13 10z" fill="#c8eef5"/><path d="M234 1069.500l-18 3 2 1 17-2.500z" fill="#777"/>
<path d="M1688 1063l5-5 5 5" fill="none" stroke="#e0e0e0" stroke-width="1.300"/>
<path d="M1712 1065c-2 0-3.500-1-3.500-3s1.500-3 3.300-3c1-3 3-4.500 6-4.500 2.500 0 4.500 1.500 5.200 3.500 1.500-.3 3.300 1 3.300 3.500 0 2.200-1.500 3.500-3.500 3.500z" fill="#d0d0d0"/>
<path d="M1709 1062h16" stroke="#fff" stroke-width="1"/>
<rect x="1738" y="1057" width="10" height="7" fill="#ddd" stroke="#fff"/><rect x="1748.500" y="1059" width="1.500" height="3" fill="#fff"/>
<path d="M1734 1055v-2M1737 1055v-2" stroke="#fff"/><path d="M1733 1055h5v3c0 1-1 1.500-2.500 1.500s-2.500-.5-2.500-1.500zM1735.500 1059v3h3" fill="none" stroke="#fff"/>
<path d="M1761 1067c0-5 4-9 10-10M1764 1067c0-3.500 2.500-6.500 7-7.500M1767 1067c0-2 1.500-3.500 4-4.500" fill="none" stroke="#ddd" stroke-width="1.100"/><circle cx="1770.500" cy="1066" r="1.500" fill="#fff"/>
<path d="M1782 1057h3l4-3.500v13l-4-3.500h-3z" fill="none" stroke="#e0e0e0" stroke-width="1.100"/><path d="M1792 1057.500l5 5M1797 1057.500l-5 5" stroke="#e0e0e0" stroke-width="1.100"/>
<text x="1821" y="1055" font-size="12" textLength="26" lengthAdjust="spacingAndGlyphs" style="fill:#f0f0f0">17:27</text>
<text x="1807" y="1073" font-size="12" textLength="54" lengthAdjust="spacingAndGlyphs" style="fill:#f0f0f0">24.03.2020</text>
<path d="M1879.500 1053.500h15v12h-5l-2.500 2.500-2.500-2.500h-5z" fill="none" stroke="#f0f0f0" stroke-width="1.100"/>
<rect x="1915" y="1040" width="1" height="40" fill="#555"/>
</svg>
</body>
</html>
